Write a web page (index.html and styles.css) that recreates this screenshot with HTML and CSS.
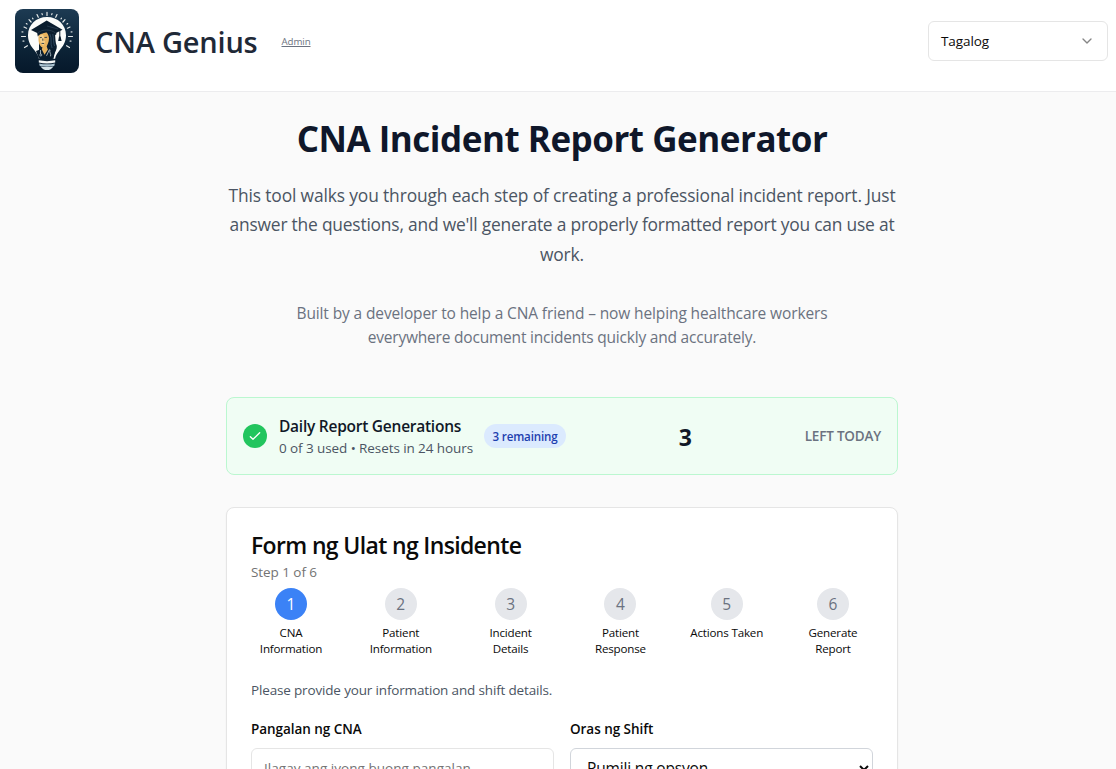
FILE: index.html
```html
<!DOCTYPE html>
<html lang="tl">
<head>
<meta charset="utf-8">
<title>CNA Genius</title>
<link rel="stylesheet" href="styles.css">
</head>
<body>
<header class="topbar">
  <div class="brand">
    <svg class="logo" viewBox="0 0 64 64" width="64" height="64" aria-hidden="true">
      <defs><linearGradient id="night" x1="0" y1="0" x2="0" y2="1"><stop offset="0" stop-color="#1d3b53"/><stop offset="0.55" stop-color="#0d2539"/><stop offset="1" stop-color="#06182a"/></linearGradient></defs>
      <rect width="64" height="64" rx="8" fill="url(#night)"/>
      <g stroke="#e4e8e8" stroke-width="1.2" stroke-linecap="round">
        <path d="M32 3.300v3.200M22 5.500l1.300 2.800M42 5.500l-1.300 2.800M27 4.600l.3 1M37 4.600l-.3 1M17.500 9.200l.5.600M14 10.600l2.100 2.400M50 10.600L47.900 13M46.500 9.200l-.5.600M11.300 14.600l.7.500M9 18l2.600 1.200M55 18l-2.600 1.200M52.700 14.600l-.7.500M7 22.800l1 .2M57 22.800l-1 .2M6.500 27.500h4M57.500 27.500h-4M8 32.200l1-.2M56 32.200l-1-.2M9.500 38.500l2.900-1.800M54.500 38.500l-2.900-1.800"/>
      </g>
      <path fill="#fbfcfa" d="M32 8c-11 0-19 8-19 18.300 0 7 3.200 11.100 6.400 15 2.400 3 4 5.200 4.500 8.500h16.200c.5-3.300 2.100-5.500 4.500-8.500C47.800 37.400 51 33.300 51 26.300 51 16 43 8 32 8z"/>
      <path fill="#0a1d2e" d="M24 24c0-5 15-6 16 1 .6 5 .2 8 1.800 12 .4 3-1.800 6-3.300 10l-1 3H25l-1-6z"/>
      <path fill="#e9b45f" d="M23.500 25c3-.2 6-1.500 7.800-2.600 1.300 2.500 2.700 4 2.700 7 0 4-2 6.500-2.300 8.200l1.300 3.400-3.500 6-3.300-5.300 1.300-3.200c-2.800-1-4-5-4-8.300z"/>
      <path fill="#f4cf8b" d="M24.500 26.500l3.500-1 1.200 3.500-.8 2.500 1.700.8-1.500 4.500c-2.600-1.200-4.100-5-4.100-10.300z"/>
      <path fill="none" stroke="#15283a" stroke-width=".8" d="M24.800 28.700l2-.3M29.500 28.500l2.600-.2M26.500 34.400l2.600.1M27.800 29.500v2.200"/>
      <path fill="none" stroke="#426078" stroke-width=".6" d="M34.800 25c2.700 5 0 9 2.300 14M37.800 25c1 5 .5 9 1.800 12"/>
      <path fill="#0a1d2e" d="M21 42l5.600-2.100 2.900 5.800 4-6 6.500 2.500-1.500 7.500H24z"/>
      <path fill="none" stroke="#c3d0d6" stroke-width=".8" d="M25.500 41v4M34.500 40.500l-3 6.300M35 40.800c-1 3 1.500 4 .5 6.500"/>
      <circle cx="25.800" cy="46" r="1" fill="none" stroke="#c3d0d6" stroke-width=".7"/>
      <path fill="#0a1d2e" d="M31.700 11.500L16 21l6.200 3 .6 3.500c2-4 13.800-6 18.200-1.200l.5-2.500 6-3z"/>
      <path fill="none" stroke="#354a5c" stroke-width=".6" d="M22.500 24c5-4 13-4 18 0M32 17l11 3"/>
      <path fill="none" stroke="#0a1d2e" stroke-width="1" d="M44.800 21.500v7"/>
      <path fill="#0a1d2e" d="M44 27.500h1.600l1 4.500h-3.400z"/>
      <path fill="#f5f7f6" d="M23.800 51.300c5.500 1.100 11 1.100 16.400 0v2.300c-5.400 1.300-10.900 1.300-16.400 0z"/>
      <path fill="#a9c1cf" d="M24.100 54.400c5.300 1.200 10.500 1.200 15.800 0l-.7 2.600c-4.700 1.100-9.700 1.100-14.400 0z"/>
      <path fill="#d5e2e8" d="M25.600 57.400c4.300.9 8.500.9 12.800 0-1.500 2.500-3.700 3.600-6.400 3.600s-4.900-1.100-6.400-3.600z"/>
    </svg>
    <span class="brand-name">CNA Genius</span>
    <a class="admin">Admin</a>
  </div>
  <div class="language"><span>Tagalog</span>
    <svg class="chevron" viewBox="0 0 16 16" width="16" height="16" aria-hidden="true"><path d="M4 6l4 4 4-4" fill="none" stroke="currentColor" stroke-width="1.330" stroke-linecap="round" stroke-linejoin="round"/></svg>
  </div>
</header>
<main class="page">
  <h1 class="title">CNA Incident Report Generator</h1>
  <p class="lead">This tool walks you through each step of creating a professional incident report. Just<br><span class="snug">answer the questions, and we'll generate a properly formatted report you can use at</span><br>work.</p>
  <p class="story">Built by a developer to help a CNA friend – now helping healthcare workers<br><span class="snug">everywhere document incidents quickly and accurately.</span></p>
  <section class="quota">
    <span class="quota-icon"><svg viewBox="0 0 24 24" width="16" height="16" aria-hidden="true"><path d="M5 13l4 4L19 7" fill="none" stroke="currentColor" stroke-width="2" stroke-linecap="round" stroke-linejoin="round"/></svg></span>
    <div class="quota-text">
      <div class="quota-title">Daily Report Generations</div>
      <div class="quota-sub">0 of 3 used • Resets in 24 hours</div>
    </div>
    <span class="pill">3 remaining</span>
    <span class="count">3</span>
    <span class="left">LEFT TODAY</span>
  </section>
  <section class="card">
    <h2 class="card-title">Form ng Ulat ng Insidente</h2>
    <div class="card-step">Step 1 of 6</div>
    <ol class="steps">
      <li class="step current"><b class="dot">1</b><span class="label">CNA<br>Information</span></li>
      <li class="step"><b class="dot">2</b><span class="label">Patient<br>Information</span></li>
      <li class="step"><b class="dot">3</b><span class="label">Incident<br>Details</span></li>
      <li class="step"><b class="dot">4</b><span class="label">Patient<br>Response</span></li>
      <li class="step slim"><b class="dot">5</b><span class="label">Actions Taken</span></li>
      <li class="step"><b class="dot">6</b><span class="label">Generate<br>Report</span></li>
    </ol>
    <p class="hint">Please provide your information and shift details.</p>
    <div class="fields">
      <div class="field">
        <div class="field-label">Pangalan ng CNA</div>
        <div class="input">Ilagay ang iyong buong pangalan</div>
      </div>
      <div class="field">
        <div class="field-label">Oras ng Shift</div>
        <div class="select"><span>Pumili ng opsyon</span>
          <svg class="caret" viewBox="0 0 10 7" width="10" height="7" aria-hidden="true"><path d="M1 1l4 4 4-4" fill="none" stroke="currentColor" stroke-width="2"/></svg>
        </div>
      </div>
    </div>
  </section>
</main>
</body>
</html>
```
FILE: styles.css
```css
* { box-sizing: border-box; }
html, body { height: 769px; overflow: hidden; }
body {
  margin: 0;
  background: #fafafa;
  font-family: "Open Sans", "Noto Sans", sans-serif;
  color: #0a0a0a;
  font-size: 15.500px;
  line-height: 24px;
  white-space: nowrap;
}
h1, h2, p, ol { margin: 0; padding: 0; }
.topbar {
  height: 92px;
  padding: 9px 8px 0 15px;
  background: #fff;
  border-bottom: 1px solid #ececee;
  display: flex;
  justify-content: space-between;
  align-items: flex-start;
}
.brand { display: flex; align-items: center; height: 64px; }
.brand-name { margin-left: 16px; font-size: 29px; line-height: 36px; font-weight: 600; letter-spacing: -0.210px; color: #1f2937; padding-top: 1px; }
.admin { margin-left: 24px; padding-top: 2px; font-size: 9.700px; line-height: 16px; letter-spacing: -0.080px; color: #6b7280; text-decoration: underline; }
.language {
  width: 180px; height: 40px; margin-top: 12px; padding: 0 12px;
  border: 1px solid #e5e5e5; border-radius: 6px;
  display: flex; align-items: center; justify-content: space-between;
  font-size: 13.500px; letter-spacing: -0.090px;
}
.chevron { color: #858585; }
.page { width: 680px; margin: 0 auto; padding: 27px 0 0 8px; }
.title { text-align: center; font-size: 35px; line-height: 40px; font-weight: 700; letter-spacing: -0.480px; color: #0f172a; }
.lead { margin-top: 22px; text-align: center; font-size: 17.400px; line-height: 29.250px; letter-spacing: -0.136px; color: #4b5563; }
.snug { letter-spacing: -0.210px; }
.story { margin-top: 32px; text-align: center; letter-spacing: -0.122px; color: #6b7280; }
.quota {
  margin-top: 48px; height: 78px; padding: 0 16px;
  display: flex; align-items: center;
  border: 1px solid #bbf7d0; border-radius: 8px; background: #f0fdf4;
}
.quota-icon { width: 24px; height: 24px; border-radius: 50%; background: #22c55e; color: #fff; display: grid; place-items: center; }
.quota-text { width: 194px; margin-left: 12px; }
.quota-title { font-weight: 600; letter-spacing: -0.250px; color: #111827; line-height: 24px; }
.quota-sub { font-size: 13.500px; line-height: 20px; letter-spacing: -0.085px; color: #4b5563; }
.pill { margin-left: 11px; padding-top: 1px; width: 82px; height: 24px; border-radius: 12px; background: #dbeafe; color: #1e40af; font-size: 11.600px; font-weight: 600; letter-spacing: -0.150px; display: grid; place-items: center; }
.count { flex: 1; text-align: center; font-size: 23px; font-weight: 700; color: #111827; padding-top: 2px; }
.left { font-size: 13.500px; font-weight: 600; letter-spacing: -0.200px; color: #6b7280; }
.card { margin-top: 32px; height: 400px; padding: 23px 24px 24px; border: 1px solid #e5e5e5; border-radius: 8px; background: #fff; box-shadow: 0 1px 2px rgba(0,0,0,.05); }
.card-title { font-size: 23px; line-height: 28px; font-weight: 600; letter-spacing: -0.650px; }
.card-step { margin-top: 3px; font-size: 13.500px; line-height: 20px; letter-spacing: -0.060px; color: #737373; }
.steps { list-style: none; display: flex; justify-content: space-between; margin-top: 6px; }
.step { width: 80px; display: flex; flex-direction: column; align-items: center; text-align: center; }
.step.slim { width: 73px; }
.dot { width: 32px; height: 32px; border-radius: 50%; background: #e5e7eb; color: #6b7280; font-weight: 400; display: grid; place-items: center; }
.current .dot { background: #3b82f6; color: #fff; }
.label { margin-top: 5px; font-size: 11.600px; line-height: 16px; letter-spacing: -0.180px; }
.hint { margin-top: 23px; font-size: 13.500px; line-height: 20px; letter-spacing: -0.160px; color: #4b5563; }
.fields { display: grid; grid-template-columns: 1fr 1fr; gap: 16px; margin-top: 19px; }
.field-label { font-size: 13.500px; line-height: 20px; font-weight: 600; letter-spacing: -0.040px; }
.input, .select { margin-top: 9px; height: 40px; border-radius: 6px; display: flex; align-items: center; justify-content: space-between; }
.input { border: 1px solid #e5e5e5; padding: 0 12px; font-size: 13.500px; letter-spacing: 0.040px; color: #737373; }
.select { border: 1px solid #d1d5db; padding: 1px 3px 0 16px; letter-spacing: -0.160px; }
```
